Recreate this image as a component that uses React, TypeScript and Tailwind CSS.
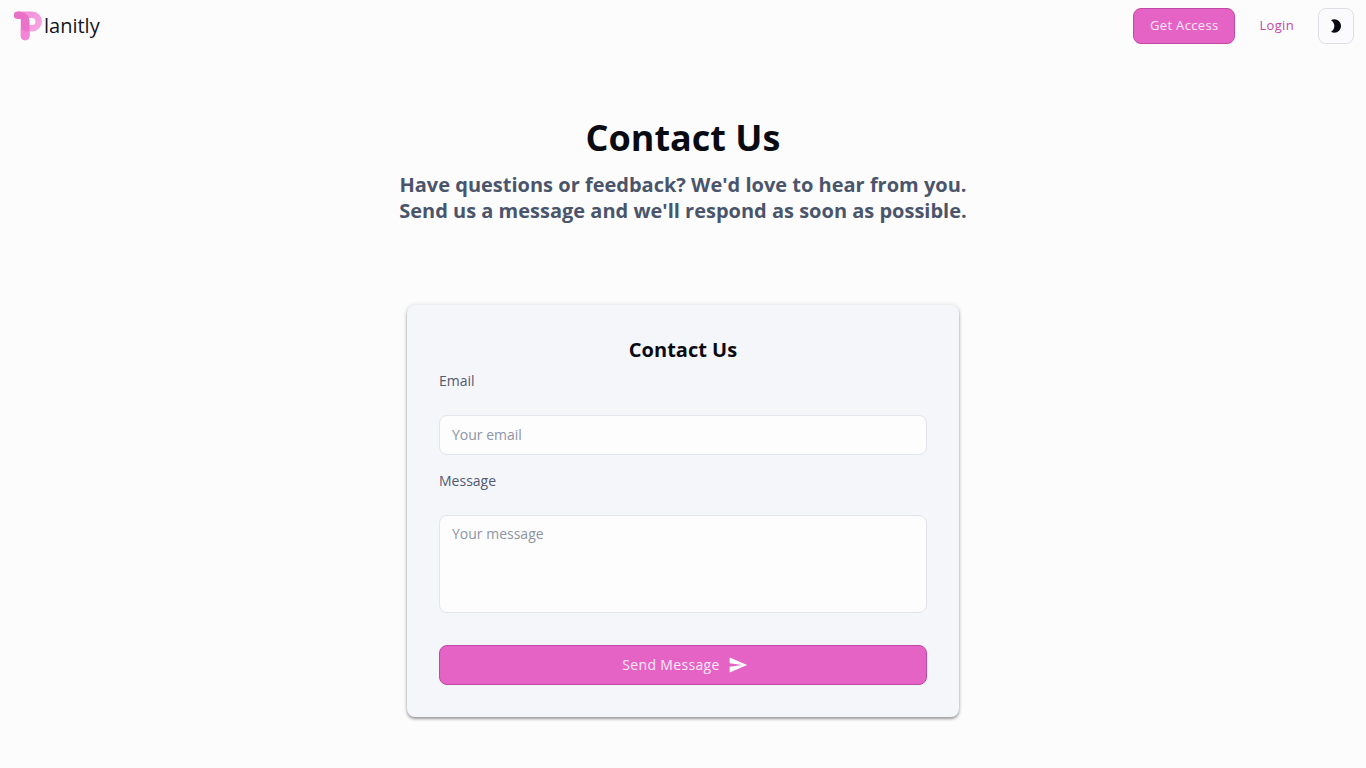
import type { FormEvent } from "react";
import { MdModeNight, MdSend } from "react-icons/md";

function LogoMark() {
  return (
    <svg viewBox="0 0 28 30" className="h-[30px] w-7" aria-hidden="true">
      <defs>
        <linearGradient id="bowl" x1="0" y1="0" x2="1" y2="1">
          <stop offset="0" stopColor="#f08ad6" />
          <stop offset="1" stopColor="#f9a8e6" />
        </linearGradient>
        <linearGradient id="stem" x1="0" y1="0" x2="0" y2="1">
          <stop offset="0" stopColor="#e970c6" />
          <stop offset="0.6" stopColor="#ea72c8" />
          <stop offset="1" stopColor="#f285d6" />
        </linearGradient>
      </defs>
      <path
        d="M3.5 0.5H18A10 10 0 0 1 18 20.5H14V14H18A3.5 3.5 0 0 0 18 7H3.5Z"
        fill="url(#bowl)"
      />
      <path
        d="M3.5 0.5C8 0.5 15.5 2.5 15.5 10V25A4.3 4.3 0 0 1 6.8 25V8H3.5A3.5 3.5 0 0 1 3.5 0.5Z"
        fill="url(#stem)"
      />
      <path d="M6.8 17C9 20 12 21 15.5 20.5V25A4.3 4.3 0 0 1 6.8 25Z" fill="#f285d6" />
    </svg>
  );
}

function Header() {
  return (
    <header className="flex h-[52px] items-center justify-between px-3">
      <a
        href="#home"
        aria-label="Planitly"
        className="flex items-center gap-0.5 pl-0.5 text-xl text-[#15161c]"
      >
        <LogoMark />
        <span>lanitly</span>
      </a>
      <nav className="flex items-center gap-2">
        <button
          type="button"
          className="h-9 rounded-lg border border-[#c148a4] bg-[#e663c6] px-4 text-[13px] tracking-wide text-[#fdeaf8]"
        >
          Get Access
        </button>
        <a href="#login" className="px-4 text-[13px] tracking-wide text-[#c247a8]">
          Login
        </a>
        <button
          type="button"
          aria-label="Toggle dark mode"
          className="flex size-9 items-center justify-center rounded-lg border border-[#dddfe7] bg-[#fbfbfd] text-[#0a0b12]"
        >
          <MdModeNight size={16} />
        </button>
      </nav>
    </header>
  );
}

function ContactForm() {
  const handleSubmit = (event: FormEvent) => event.preventDefault();
  return (
    <form
      onSubmit={handleSubmit}
      className="mx-auto mt-[81px] flex w-full max-w-[552px] flex-col rounded-lg bg-[#f4f6fa] p-8 text-sm shadow-[0_2px_3px_rgba(0,0,0,0.35),0_0_5px_rgba(0,0,0,0.12)]"
    >
      <h2 className="text-center text-xl leading-[26px] font-bold text-[#0a0b12]">Contact Us</h2>
      <label htmlFor="email" className="mt-1.5 leading-6 text-[#525972]">
        Email
      </label>
      <input
        id="email"
        type="email"
        placeholder="Your email"
        className="mt-[22px] h-10 rounded-lg border border-[#e2e4ee] bg-[#fdfdfd] px-3 pb-0.5 leading-5 placeholder:text-[#8d94a5]"
      />
      <label htmlFor="message" className="mt-[14px] leading-6 text-[#525972]">
        Message
      </label>
      <textarea
        id="message"
        placeholder="Your message"
        className="mt-[22px] h-[98px] resize-none rounded-lg border border-[#e2e4ee] bg-[#fdfdfd] px-3 py-2 placeholder:text-[#8d94a5]"
      />
      <button
        type="submit"
        className="mt-8 flex h-10 items-center justify-center gap-2 rounded-lg border border-[#c148a4] bg-[#e663c6] pl-1 tracking-wide text-[#fdeaf8]"
      >
        Send Message
        <MdSend size={20} className="text-white" />
      </button>
    </form>
  );
}

export default function App() {
  return (
    <div className="min-h-screen bg-[#fcfcfd] font-['Open_Sans',sans-serif]">
      <Header />
      <main className="px-4 pt-16 pb-12">
        <h1 className="text-center text-4xl leading-[44px] font-bold text-[#0a0b12]">Contact Us</h1>
        <p className="mx-auto mt-3 max-w-[600px] text-center text-xl leading-[26px] font-bold text-[#4a556b]">
          Have questions or feedback? We'd love to hear from you.
          <br />
          Send us a message and we'll respond as soon as possible.
        </p>
        <ContactForm />
      </main>
    </div>
  );
}
